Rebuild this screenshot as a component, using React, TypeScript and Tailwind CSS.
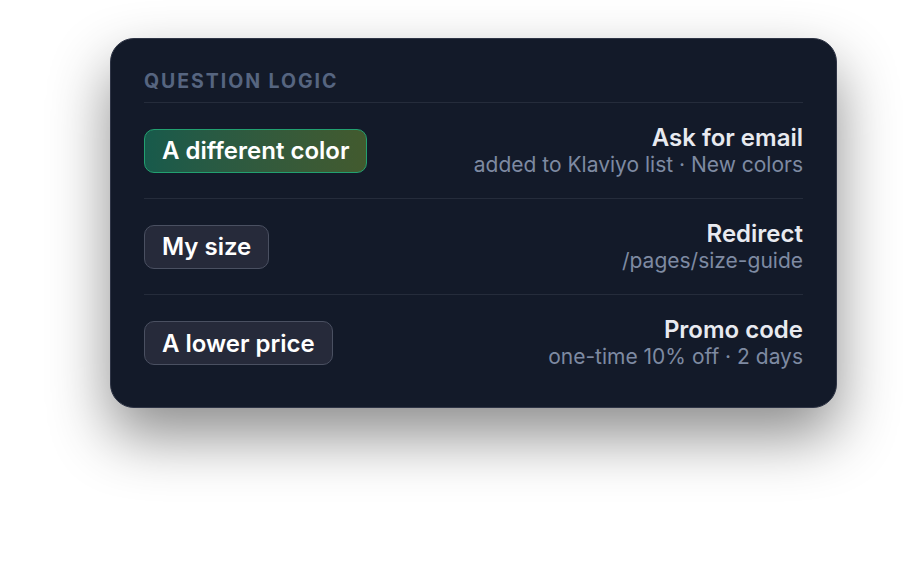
import React from "react";

const rows = [
  { pill: "A different color", green: true, title: "Ask for email", sub: "added to Klaviyo list · New colors" },
  { pill: "My size", green: false, title: "Redirect", sub: "/pages/size-guide" },
  { pill: "A lower price", green: false, title: "Promo code", sub: "one-time 10% off · 2 days" },
];

export default function App() {
  return (
    <div className="w-[918px] h-[568px] bg-white pt-[38px] pl-[110px]" style={{ fontFamily: "Inter, 'Noto Sans', sans-serif" }}>
      <div className="w-[727px] rounded-[24px] border border-[#2f3546] bg-[#131a29] px-[33px] pt-[28px] pb-[16px] shadow-[0_28px_60px_rgba(0,0,0,0.45)]">
        <div className="border-b border-[#252c3b] pb-[7px] text-[19.5px] leading-[28px] font-bold tracking-[0.1em] text-[#566580]">
          QUESTION LOGIC
        </div>
        {rows.map((r, i) => (
          <div
            key={i}
            className={`flex h-[96px] items-center justify-between ${i < rows.length - 1 ? "border-b border-[#252c3b]" : ""}`}
          >
            <div
              className={
                r.green
                  ? "h-[44px] flex items-center rounded-[10px] border border-[#22a070] bg-gradient-to-r from-[#175a4b] to-[#425a2e] px-[17px] pt-[1px] text-[24px] font-semibold text-white"
                  : "h-[44px] flex items-center rounded-[10px] border border-[#4a5061] bg-[#262a3a] px-[17px] pt-[1px] text-[24px] font-semibold text-white"
              }
            >
              {r.pill}
            </div>
            <div className="flex flex-col items-end">
              <div className="text-[24px] leading-[27px] font-semibold text-[#e8eaf0]">{r.title}</div>
              <div className="text-[21px] leading-[27px] text-[#7e8aa2]">{r.sub}</div>
            </div>
          </div>
        ))}
      </div>
    </div>
  );
}
